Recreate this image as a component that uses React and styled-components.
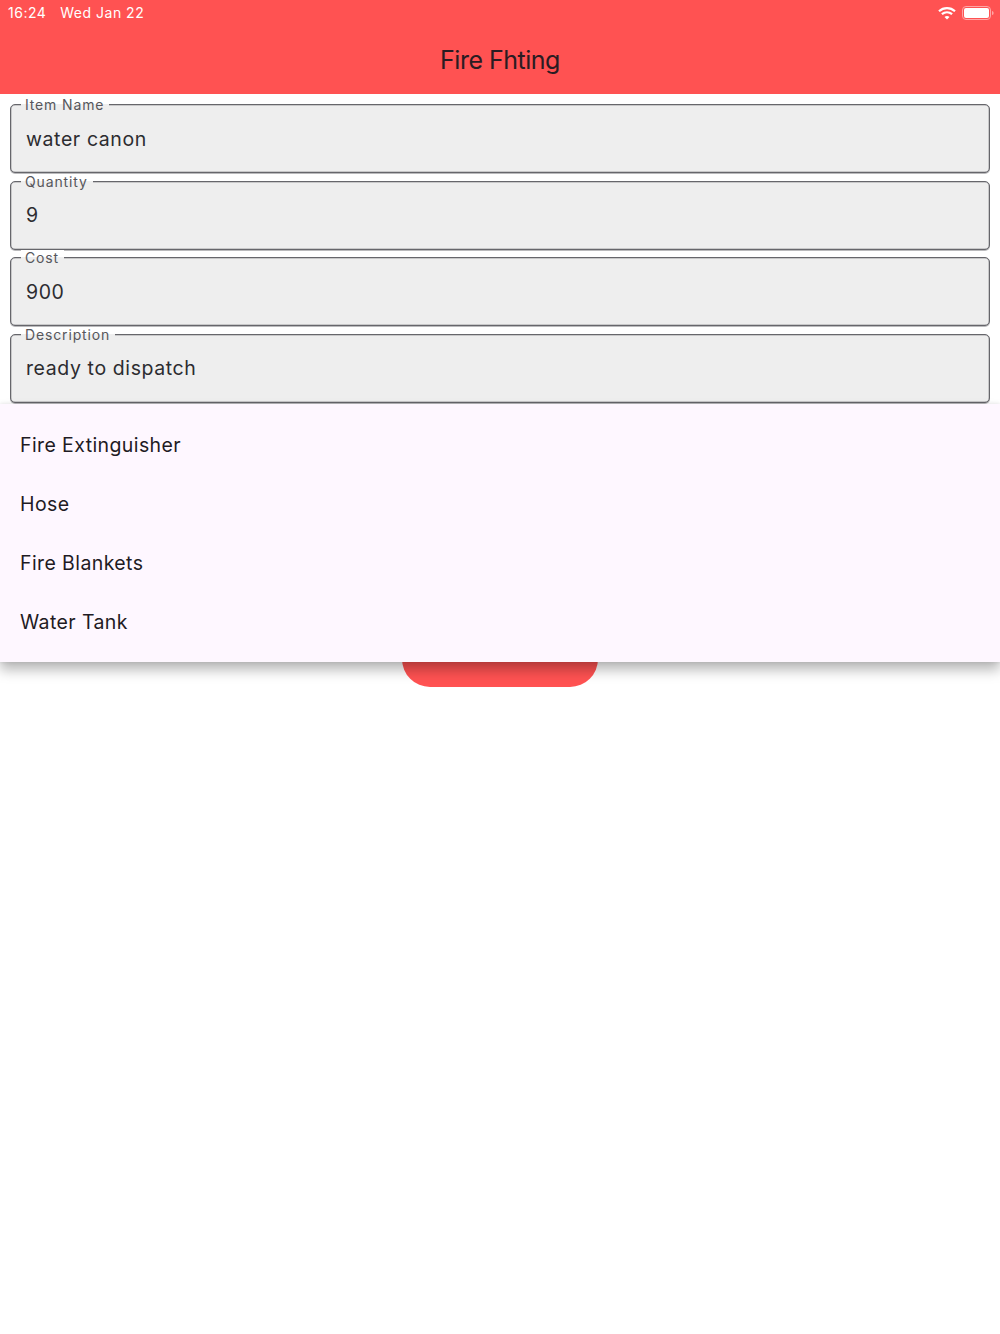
import React from 'react';
import styled, { createGlobalStyle } from 'styled-components';

const Global = createGlobalStyle`
  html, body { margin: 0; padding: 0; background: #fff; }
  body { font-family: Inter, "Liberation Sans", sans-serif; }
`;
const Page = styled.div`
  position: relative;
  width: 1000px;
  height: 1334px;
  overflow: hidden;
  background: #fff;
`;
const Header = styled.header`
  height: 94px;
  background: #ff5252;
  display: flex;
  flex-direction: column;
`;
const StatusBar = styled.div`
  height: 25px;
  padding: 0 6px 0 8px;
  display: flex;
  align-items: center;
  justify-content: space-between;
  color: #fff;
  font-size: 14px;
  letter-spacing: 0.5px;
`;
const Clock = styled.div`
  display: flex;
  gap: 14px;
`;
const StatusIcons = styled.div`
  display: flex;
  align-items: center;
  gap: 6px;
`;
const Title = styled.h1`
  margin: 0;
  padding-top: 17px;
  text-align: center;
  font-size: 25px;
  line-height: 36px;
  font-weight: 400;
  letter-spacing: -0.5px;
  color: #2a1c22;
`;
const Form = styled.form`
  padding: 10px 10px 0;
  display: flex;
  flex-direction: column;
  align-items: stretch;
  gap: 7.6px;
`;
const Field = styled.div`
  height: 69px;
  padding: 0 15px;
  box-sizing: border-box;
  border: 1px solid #66666b;
  border-radius: 5px;
  background: #eeeeee;
  box-shadow: inset 0 0 0 0.5px rgba(102, 102, 107, 0.55), 0 1px 0 rgba(102, 102, 107, 0.45);
  position: relative;
  display: flex;
  align-items: center;
`;
const Legend = styled.label`
  position: absolute;
  top: -8px;
  left: 10px;
  padding: 0 5px 0 4px;
  font-size: 14px;
  line-height: 16px;
  letter-spacing: 0.85px;
  color: #57575c;
  background: linear-gradient(to bottom, #fff 0 7px, #eeeeee 7px);
`;
const Value = styled.div`
  font-size: 19.5px;
  letter-spacing: 0.6px;
  color: #2c2c30;
`;
const Submit = styled.button`
  align-self: center;
  width: 196px;
  height: 60px;
  margin-top: 216.200px;
  padding: 0 0 3px;
  border: 0;
  border-radius: 28px;
  background: #ff5252;
  color: #4f378b;
  font: 400 20px Inter, "Liberation Sans", sans-serif;
  letter-spacing: 0.9px;
`;
const Menu = styled.ul`
  position: absolute;
  left: 0;
  right: 0;
  top: 404px;
  height: 258px;
  box-sizing: border-box;
  margin: 0;
  padding: 11px 20px 10px;
  list-style: none;
  background: #fef7ff;
  box-shadow: 0 8px 12px rgba(0, 0, 0, 0.28), 0 0 4px rgba(0, 0, 0, 0.1);
  display: flex;
  flex-direction: column;
`;
const MenuItem = styled.li`
  flex: 1;
  display: flex;
  align-items: center;
  font-size: 19.5px;
  letter-spacing: 0.4px;
  color: #1f1b24;
`;

const fields = [
  ['Item Name', 'water canon'],
  ['Quantity', '9'],
  ['Cost', '900'],
  ['Description', 'ready to dispatch'],
];
const items = ['Fire Extinguisher', 'Hose', 'Fire Blankets', 'Water Tank'];

export default function App() {
  return (
    <Page>
      <Global />
      <Header>
        <StatusBar>
          <Clock><span>16:24</span><span>Wed Jan 22</span></Clock>
          <StatusIcons>
            <svg width="18" height="14" viewBox="0 0 18 14" aria-hidden="true">
              <path d="M1 5.2C5.6 1 12.4 1 17 5.2" fill="none" stroke="#fff" strokeWidth="2.2" />
              <path d="M3.900 8.200C6.900 5.600 11.100 5.600 14.100 8.200" fill="none" stroke="#fff" strokeWidth="2.2" />
              <path d="M6.500 11C8 9.800 10 9.800 11.500 11L9 13.400Z" fill="#fff" />
            </svg>
            <svg width="32" height="14" viewBox="0 0 32 14" aria-hidden="true">
              <rect x="0.5" y="0.5" width="28" height="13" rx="3.5" fill="none" stroke="#ffa5a5" />
              <rect x="2" y="2" width="25" height="10" rx="2" fill="#fff" />
              <path d="M30 5v4c1 0 1.600-1 1.600-2S31 5 30 5Z" fill="#ffa5a5" />
            </svg>
          </StatusIcons>
        </StatusBar>
        <Title>Fire Fhting</Title>
      </Header>
      <Form>
        {fields.map(([label, value]) => (
          <Field key={label}>
            <Legend>{label}</Legend>
            <Value>{value}</Value>
          </Field>
        ))}
        <Submit type="button">Submit</Submit>
      </Form>
      <Menu>
        {items.map((item) => <MenuItem key={item}>{item}</MenuItem>)}
      </Menu>
    </Page>
  );
}
